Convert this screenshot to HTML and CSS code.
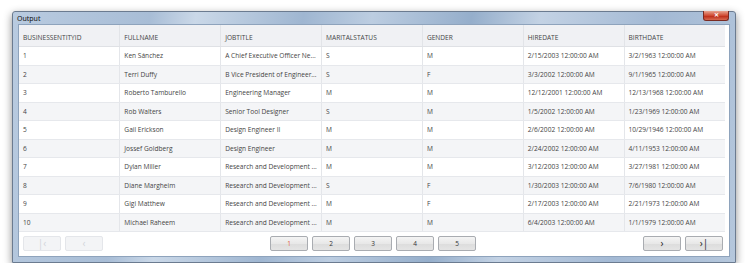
FILE: index.html
```html
<!DOCTYPE html>
<html lang="en">
<head>
    <meta charset="UTF-8">
    <title>Output</title>
    <link rel="stylesheet" href="styles.css">
</head>
<body>
    <div class="window">
        <div class="titlebar">
            <span class="title">Output</span>
            <div class="close">&#x2715;</div>
        </div>
        <div class="client">
            <table class="grid">
                <thead>
                    <tr>
                        <th>BUSINESSENTITYID</th>
                        <th>FULLNAME</th>
                        <th>JOBTITLE</th>
                        <th>MARITALSTATUS</th>
                        <th>GENDER</th>
                        <th>HIREDATE</th>
                        <th>BIRTHDATE</th>
                    </tr>
                </thead>
                <tbody>
                    <tr><td>1</td><td>Ken Sánchez</td><td>A Chief Executive Officer Ne...</td><td>S</td><td>M</td><td>2/15/2003 12:00:00 AM</td><td>3/2/1963 12:00:00 AM</td></tr>
                    <tr><td>2</td><td>Terri Duffy</td><td>B Vice President of Engineer...</td><td>S</td><td>F</td><td>3/3/2002 12:00:00 AM</td><td>9/1/1965 12:00:00 AM</td></tr>
                    <tr><td>3</td><td>Roberto Tamburello</td><td>Engineering Manager</td><td>M</td><td>M</td><td>12/12/2001 12:00:00 AM</td><td>12/13/1968 12:00:00 AM</td></tr>
                    <tr><td>4</td><td>Rob Walters</td><td>Senior Tool Designer</td><td>S</td><td>M</td><td>1/5/2002 12:00:00 AM</td><td>1/23/1969 12:00:00 AM</td></tr>
                    <tr><td>5</td><td>Gail Erickson</td><td>Design Engineer II</td><td>M</td><td>M</td><td>2/6/2002 12:00:00 AM</td><td>10/29/1946 12:00:00 AM</td></tr>
                    <tr><td>6</td><td>Jossef Goldberg</td><td>Design Engineer</td><td>M</td><td>M</td><td>2/24/2002 12:00:00 AM</td><td>4/11/1953 12:00:00 AM</td></tr>
                    <tr><td>7</td><td>Dylan Miller</td><td>Research and Development ...</td><td>M</td><td>M</td><td>3/12/2003 12:00:00 AM</td><td>3/27/1981 12:00:00 AM</td></tr>
                    <tr><td>8</td><td>Diane Margheim</td><td>Research and Development ...</td><td>S</td><td>F</td><td>1/30/2003 12:00:00 AM</td><td>7/6/1980 12:00:00 AM</td></tr>
                    <tr><td>9</td><td>Gigi Matthew</td><td>Research and Development ...</td><td>M</td><td>F</td><td>2/17/2003 12:00:00 AM</td><td>2/21/1973 12:00:00 AM</td></tr>
                    <tr><td>10</td><td>Michael Raheem</td><td>Research and Development ...</td><td>M</td><td>M</td><td>6/4/2003 12:00:00 AM</td><td>1/1/1979 12:00:00 AM</td></tr>
                </tbody>
            </table>
            <div class="pager">
                <div class="pager-side">
                    <button class="pbtn nav" disabled>|&lsaquo;</button>
                    <button class="pbtn nav" disabled>&lsaquo;</button>
                </div>
                <div class="pager-pages">
                    <button class="pbtn current">1</button>
                    <button class="pbtn">2</button>
                    <button class="pbtn">3</button>
                    <button class="pbtn">4</button>
                    <button class="pbtn">5</button>
                </div>
                <div class="pager-side">
                    <button class="pbtn nav">&rsaquo;</button>
                    <button class="pbtn nav">&rsaquo;|</button>
                </div>
            </div>
        </div>
    </div>
</body>
</html>
```

FILE: styles.css
```css
body {
    margin: 0;
    background-color: #fff;
    font-family: "Open Sans", "Noto Sans", sans-serif;
    color: #333;
}
.window {
    position: relative;
    margin: 11px 0 0 12px;
    width: 722px;
    height: 250px;
    border: 1px solid #6b7b90;
    border-radius: 3px 3px 0 0;
    background: linear-gradient(100deg, #b9cbe0 0%, #a8bdd6 18%, #cad8e8 24%, #9fb6d1 38%, #bccde1 47%, #95aecb 60%, #c3d2e4 69%, #a3b9d4 84%, #b5c7dc 100%);
    box-shadow: 0 3px 9px rgba(0,0,0,0.45);
    display: flex;
    flex-direction: column;
}
.titlebar {
    height: 12px;
    display: flex;
    align-items: center;
    padding-left: 4px;
}
.title {
    font-family: "Noto Sans", sans-serif;
    font-size: 7px;
    color: #111;
}
.close {
    position: absolute;
    top: -1px;
    right: 6px;
    width: 24px;
    height: 9px;
    border: 1px solid #7a2b22;
    border-top: none;
    border-radius: 0 0 3px 3px;
    background: linear-gradient(#e8a590, #cf4b33 50%, #c0321c 60%, #d66a50);
    color: #fff;
    font-size: 6px;
    line-height: 9px;
    text-align: center;
    font-weight: bold;
}
.client {
    flex: 1;
    margin: 0 5px 5px 5px;
    border: 1px solid #8ea3bc;
    background-color: #fff;
    padding: 0 3px 0 0;
    display: flex;
    flex-direction: column;
}
.grid {
    width: 706px;
    table-layout: fixed;
    border-collapse: collapse;
    font-size: 6.6px;
}
.grid th {
    height: 18px;
    padding: 3px 4px 0;
    text-align: left;
    font-weight: normal;
    color: #444;
    background-color: #f0f1f4;
    border-right: 1px solid #e2e4e8;
    border-bottom: 1px solid #dfe1e5;
}
.grid td {
    height: 17.5px;
    padding: 0 4px;
    color: #444;
    border-right: 1px solid #e4e6ea;
    border-bottom: 1px solid #e6e8ec;
    white-space: nowrap;
    overflow: hidden;
}
.grid th:last-child,
.grid td:last-child {
    border-right: none;
}
.grid tbody tr:nth-child(even) td {
    background-color: #f4f5f7;
}
.pager {
    display: flex;
    justify-content: space-between;
    align-items: center;
    padding: 4px 3px 0 4px;
}
.pager-side,
.pager-pages {
    display: flex;
    gap: 4px;
}
.pbtn {
    width: 38px;
    height: 15px;
    padding: 0;
    border: 1px solid #a9acb1;
    border-radius: 2px;
    background: linear-gradient(#f4f4f4, #e8e8e8 50%, #dcdcdc 51%, #e4e4e4);
    font-family: "Open Sans", sans-serif;
    font-size: 6.5px;
    color: #333;
}
.pbtn.nav {
    font-size: 10px;
    line-height: 13px;
    color: #222;
}
.pbtn:disabled {
    border-color: #e4e6ea;
    background: #f3f4f6;
    color: #d2d5da;
}
.pbtn.current {
    color: #e06040;
}
```
